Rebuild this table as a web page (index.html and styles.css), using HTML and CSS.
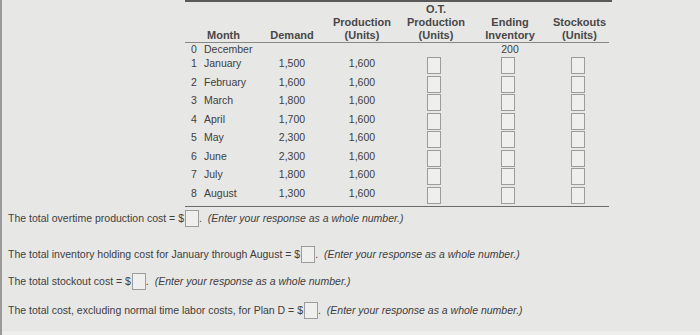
FILE: index.html
```html
<!DOCTYPE html>
<html>
<head>
<meta charset="utf-8">
<link rel="stylesheet" href="styles.css">
</head>
<body>
<div class="page">
  <div class="topbar"></div>
  <table class="plan">
    <colgroup>
      <col class="c-month"><col class="c-demand"><col class="c-prod"><col class="c-ot"><col class="c-end"><col class="c-stock">
    </colgroup>
    <thead>
      <tr>
        <th>Month</th>
        <th>Demand</th>
        <th>Production<br>(Units)</th>
        <th>O.T.<br>Production<br>(Units)</th>
        <th>Ending<br>Inventory</th>
        <th>Stockouts<br>(Units)</th>
      </tr>
    </thead>
    <tbody>
      <tr class="dec"><td class="m"><span class="n">0</span>December</td><td></td><td></td><td></td><td>200</td><td></td></tr>
      <tr><td class="m"><span class="n">1</span>January</td><td>1,500</td><td>1,600</td><td><span class="box"></span></td><td><span class="box"></span></td><td><span class="box"></span></td></tr>
      <tr><td class="m"><span class="n">2</span>February</td><td>1,600</td><td>1,600</td><td><span class="box"></span></td><td><span class="box"></span></td><td><span class="box"></span></td></tr>
      <tr><td class="m"><span class="n">3</span>March</td><td>1,800</td><td>1,600</td><td><span class="box"></span></td><td><span class="box"></span></td><td><span class="box"></span></td></tr>
      <tr><td class="m"><span class="n">4</span>April</td><td>1,700</td><td>1,600</td><td><span class="box"></span></td><td><span class="box"></span></td><td><span class="box"></span></td></tr>
      <tr><td class="m"><span class="n">5</span>May</td><td>2,300</td><td>1,600</td><td><span class="box"></span></td><td><span class="box"></span></td><td><span class="box"></span></td></tr>
      <tr><td class="m"><span class="n">6</span>June</td><td>2,300</td><td>1,600</td><td><span class="box"></span></td><td><span class="box"></span></td><td><span class="box"></span></td></tr>
      <tr><td class="m"><span class="n">7</span>July</td><td>1,800</td><td>1,600</td><td><span class="box"></span></td><td><span class="box"></span></td><td><span class="box"></span></td></tr>
      <tr class="last"><td class="m"><span class="n">8</span>August</td><td>1,300</td><td>1,600</td><td><span class="box"></span></td><td><span class="box"></span></td><td><span class="box"></span></td></tr>
    </tbody>
  </table>
  <div class="rule"></div>
  <div class="questions">
    <p class="q1">The total overtime production cost = $<span class="box"></span>. <i>(Enter your response as a whole number.)</i></p>
    <p class="q2">The total inventory holding cost for January through August = $<span class="box"></span>. <i>(Enter your response as a whole number.)</i></p>
    <p class="q3">The total stockout cost = $<span class="box"></span>. <i>(Enter your response as a whole number.)</i></p>
    <p class="q4">The total cost, excluding normal time labor costs, for Plan D = $<span class="box"></span>. <i>(Enter your response as a whole number.)</i></p>
  </div>
  <div class="bottomstrip"></div>
</div>
</body>
</html>
```
FILE: styles.css
```css
html, body {
  margin: 0;
  padding: 0;
}
body {
  width: 700px;
  height: 335px;
  overflow: hidden;
  background: #e7e7e5;
  font-family: "Liberation Sans", Arial, sans-serif;
  color: #404040;
}
.page {
  position: relative;
  height: 335px;
  border-left: 2px solid #9a9a98;
  box-sizing: border-box;
  padding-top: 2px;
}
.topbar {
  position: absolute;
  left: 183px;
  top: 0;
  width: 427px;
  height: 2px;
  background: #5a5a5a;
}
.bottomstrip {
  position: absolute;
  left: 0;
  right: 0;
  bottom: 0;
  height: 4px;
  background: #eeeeec;
}
.plan {
  border-collapse: separate;
  border-spacing: 0;
  margin-left: 183px;
  table-layout: fixed;
  width: 424px;
  font-size: 10.5px;
}
.rule {
  margin-left: 183px;
  margin-top: 1px;
  width: 424px;
  height: 1px;
  background: #6c6c6c;
}
.c-month { width: 77px; }
.c-demand { width: 60px; }
.c-prod { width: 80px; }
.c-ot { width: 68px; }
.c-end { width: 80px; }
.c-stock { width: 59px; }
.plan thead th {
  font-weight: bold;
  color: #484848;
  vertical-align: bottom;
  line-height: 13px;
  padding: 1px 0 0;
  font-size: 11px;
  border-bottom: 1px solid #888888;
  text-align: center;
}
.plan td {
  text-align: center;
  padding: 0;
  height: 18.5px;
  line-height: 14px;
  vertical-align: top;
}
.plan tr.dec td {
  height: 13px;
  line-height: 12px;
}
.plan tr.last td {
  height: 19.5px;
}
.plan td.m {
  text-align: left;
  padding-left: 6px;
}
.n {
  display: inline-block;
  width: 13px;
}
.box {
  display: inline-block;
  width: 12px;
  height: 15px;
  border: 1px solid #9c9c9c;
  background: #efefed;
}
.plan td .box {
  margin-left: -4px;
  margin-top: 1px;
  vertical-align: top;
}
.questions {
  padding-left: 6px;
  font-size: 10.5px;
}
.questions p {
  margin: 0;
  line-height: 17px;
}
.questions .q1 { margin-top: 3px; margin-bottom: 19px; }
.questions .q2 { margin-bottom: 10px; }
.questions .q3 { margin-bottom: 12px; }
.questions .box {
  margin-left: 1px;
  vertical-align: -5px;
}
.questions i {
  margin-left: 3px;
}
```
